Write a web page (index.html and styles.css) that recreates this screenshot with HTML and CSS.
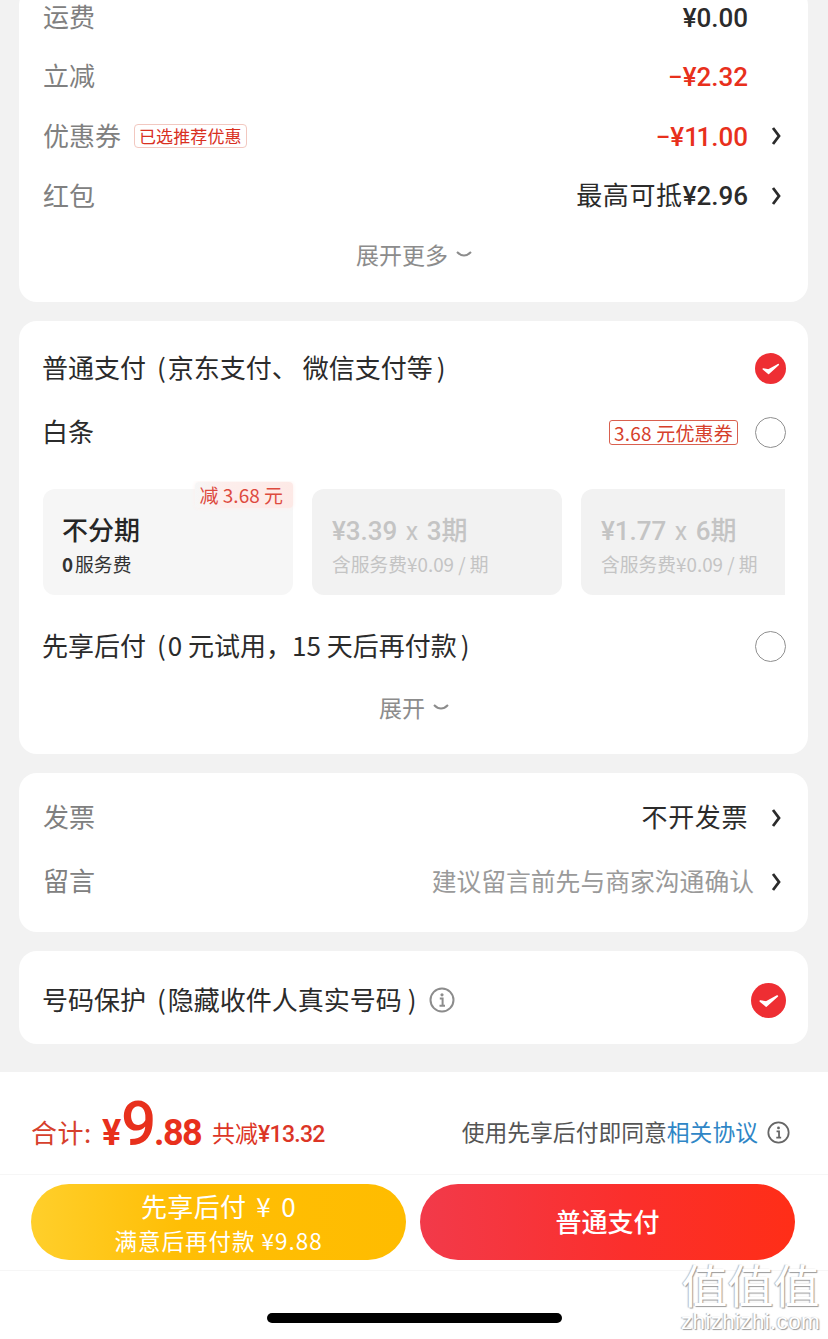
FILE: index.html
```html
<!DOCTYPE html>
<html lang="zh-CN">
<head>
<meta charset="utf-8">
<title>订单结算</title>
<link rel="stylesheet" href="styles.css">
</head>
<body>
<div class="screen">
  <main class="content">
    <section class="card card-fees">
      <div class="row row-fee"><span class="label">运费</span><span class="value num">¥0.00</span><span class="slot"></span></div>
      <div class="row row-fee"><span class="label">立减</span><span class="value num red">−¥2.32</span><span class="slot"></span></div>
      <div class="row row-fee"><span class="label">优惠券</span><span class="tag-soft">已选推荐优惠</span><span class="value num red">−¥<span class="tight">11</span>.00</span><span class="slot"><svg class="chev" viewBox="0 0 10 20"><path d="M2 2 L8 10 L2 18"/></svg></span></div>
      <div class="row row-fee"><span class="label">红包</span><span class="value wide">最高可抵<span class="num-inline">¥2.96</span></span><span class="slot"><svg class="chev" viewBox="0 0 10 20"><path d="M2 2 L8 10 L2 18"/></svg></span></div>
      <div class="expand expand-more">展开更多<svg class="down" viewBox="0 0 16 6"><path d="M1 1 Q8 8 15 1"/></svg></div>
    </section>

    <section class="card card-pay">
      <div class="row row-pay-first"><span class="title">普通支付<span class="par-l">(</span>京东支付<span class="comma">、</span>微信支付等<span class="par-r">)</span></span><span class="radio on"><svg viewBox="0 0 32 32"><circle cx="16" cy="16" r="16"/><path d="M8.5 16.5 L14 21 L24 12 L14 17.5 Z"/></svg></span></div>
      <div class="row row-baitiao"><span class="title">白条</span><span class="tag-line">3.68 元优惠券</span><span class="radio"></span></div>
      <div class="plans">
        <div class="plan plan-active">
          <span class="plan-badge">减 3.68 元</span>
          <div class="plan-main">不分期</div>
          <div class="plan-sub"><b>0</b><span class="plan-fee">服务费</span></div>
        </div>
        <div class="plan">
          <div class="plan-main">¥3.39 <i>x</i> 3期</div>
          <div class="plan-sub">含服务费¥0.09 / 期</div>
        </div>
        <div class="plan">
          <div class="plan-main">¥1.77 <i>x</i> 6期</div>
          <div class="plan-sub">含服务费¥0.09 / 期</div>
        </div>
      </div>
      <div class="row row-later"><span class="title">先享后付<span class="par-l">(</span>0 元试用，15 天后再付款<span class="par-r">)</span></span><span class="radio"></span></div>
      <div class="expand expand-pay">展开<svg class="down" viewBox="0 0 16 6"><path d="M1 1 Q8 8 15 1"/></svg></div>
    </section>

    <section class="card card-invoice">
      <div class="row row-invoice"><span class="label">发票</span><span class="value wide">不开发票</span><span class="slot"><svg class="chev" viewBox="0 0 10 20"><path d="M2 2 L8 10 L2 18"/></svg></span></div>
      <div class="row row-invoice"><span class="label">留言</span><span class="value hint">建议留言前先与商家沟通确认</span><span class="slot slot-narrow"><svg class="chev" viewBox="0 0 10 20"><path d="M2 2 L8 10 L2 18"/></svg></span></div>
    </section>

    <section class="card card-privacy">
      <span class="title">号码保护<span class="par-l">(</span>隐藏收件人真实号码<span class="par-r par-r-wide">)</span></span>
      <svg class="info info-grey" viewBox="0 0 26 26"><circle cx="13" cy="13" r="11.5"/><path d="M10.8 11.6 H13.6 V18.6 M10.5 18.8 H16"/><circle class="dot" cx="13" cy="7.8" r="1.6"/></svg>
      <span class="radio radio-big on"><svg viewBox="0 0 32 32"><circle cx="16" cy="16" r="16"/><path d="M8.5 16.5 L14 21 L24 12 L14 17.5 Z"/></svg></span>
    </section>
  </main>

  <footer class="footer">
    <div class="total">
      <div class="sum">
        <span class="sum-label">合计:</span>
        <span class="sum-yen">¥</span><span class="sum-big">9</span><span class="sum-cents">.88</span>
        <span class="sum-save">共减<span class="sum-save-num">¥13.32</span></span>
      </div>
      <div class="agree">
        <span>使用先享后付即同意<span class="link">相关协议</span></span>
        <svg class="info info-dark" viewBox="0 0 26 26"><circle cx="13" cy="13" r="11.5"/><path d="M10.8 11.6 H13.6 V18.6 M10.5 18.8 H16"/><circle class="dot" cx="13" cy="7.8" r="1.6"/></svg>
      </div>
    </div>
    <div class="actions">
      <button class="btn btn-yellow"><span class="btn-top">先享后付 ¥ 0</span><span class="btn-bottom">满意后再付款 ¥9.88</span></button>
      <button class="btn btn-red">普通支付</button>
    </div>
    <div class="home"><span class="home-bar"></span></div>
    <div class="watermark"><span class="wm-cn">值值值</span><span class="wm-en">zhizhizhi.com</span></div>
  </footer>
</div>
</body>
</html>
```
FILE: styles.css
```css
* { box-sizing: border-box; }
html, body { margin: 0; padding: 0; }
body {
  background: #f2f2f2;
  font-family: "Noto Sans CJK SC", "Noto Sans", sans-serif;
  color: #262626;
}
.screen {
  width: 828px;
  height: 1339px;
  overflow: hidden;
  display: flex;
  flex-direction: column;
  position: relative;
  background: #f2f2f2;
}
.content {
  flex: 1;
  display: flex;
  flex-direction: column;
  gap: 19px;
  padding: 0 20px 0 19px;
  margin-top: -13px;
}
.card {
  background: #fff;
  border-radius: 18px;
  padding: 0 22px 0 23px;
}
.row { display: flex; align-items: center; }
.label { font-size: 26px; line-height: 32px; color: #808080; margin: 0 0 2px 1px; }
.title { font-size: 26px; line-height: 36px; color: #2b2b2b; white-space: nowrap; margin-bottom: 2px; }
.value { margin-left: auto; font-size: 26px; line-height: 32px; color: #2b2b2b; white-space: nowrap; margin-bottom: 2px; }
.wide { letter-spacing: 0.6px; }
.num { font-family: "Roboto", "Noto Sans CJK SC", sans-serif; font-weight: 500; margin-bottom: 0; margin-top: 2px; }
.num-inline { font-family: "Roboto", "Noto Sans CJK SC", sans-serif; font-weight: 500; letter-spacing: 0; }
.tight { letter-spacing: -2.5px; margin-right: 2.5px; }
.red { color: #e8301c; }
.hint { color: #9a9a9a; font-size: 24.8px; }
.par-l { margin: 0 2px 0 11px; }
.par-r { margin: 0 2px 0 4px; }
.par-r-wide { margin-left: 6px; }
.comma { margin-right: 5px; }
.slot { width: 38px; flex: none; display: flex; justify-content: flex-end; padding-right: 5px; }
.slot-narrow { width: 32px; }
.chev { width: 10px; height: 20px; fill: none; stroke: #2b2b2b; stroke-width: 2.8; }

.card-fees { height: 315px; }
.row-fee { height: 59.6px; }
.tag-soft {
  margin-left: 13px;
  font-size: 17px;
  line-height: 22px;
  height: 24px;
  padding: 0 4px;
  color: #d9301f;
  border: 1px solid #f2c8c0;
  border-radius: 4px;
  white-space: nowrap;
  letter-spacing: 0.1px;
}
.expand {
  display: flex;
  justify-content: center;
  align-items: center;
  gap: 8px;
  color: #8c8c8c;
  font-size: 23px;
  line-height: 30px;
}
.expand-more { height: 58px; }
.down { width: 16px; height: 6px; fill: none; stroke: #8c8c8c; stroke-width: 2; }

.card-pay { height: 433px; }
.row-pay-first { height: 64px; margin-top: 15px; justify-content: space-between; }
.row-baitiao { height: 64px; }
.tag-line {
  margin-left: auto;
  margin-right: 17px;
  font-size: 19px;
  line-height: 23px;
  height: 25px;
  padding: 0 4px;
  color: #d6402c;
  border: 1px solid #d9604f;
  border-radius: 3px;
  white-space: nowrap;
  letter-spacing: 0.2px;
}
.radio {
  flex: none;
  width: 31px;
  height: 31px;
  border-radius: 50%;
  border: 1.5px solid #8f8f8f;
  display: block;
}
.radio.on { border: 0; }
.radio svg { display: block; width: 100%; height: 100%; }
.radio svg circle { fill: #ee2e33; }
.radio svg path { fill: #fff; stroke: #fff; stroke-width: 1.6; stroke-linejoin: round; }
.radio-big { width: 35px; height: 35px; margin-left: auto; }

.plans {
  display: flex;
  gap: 19px;
  overflow: hidden;
  margin: 17px 1px 0;
  padding-top: 8px;
}
.plan {
  flex: none;
  width: 250px;
  height: 106px;
  background: #f2f2f2;
  border-radius: 12px;
  padding: 22px 19px 0 20px;
  position: relative;
  overflow: hidden;
  color: #c4c4c4;
  white-space: nowrap;
}
.plan-active { background: #f6f6f6; color: #262626; overflow: visible; padding-left: 19px; }
.plan-main { height: 38px; font-size: 26px; line-height: 40px; font-weight: 500; font-family: "Roboto", "Noto Sans CJK SC", sans-serif; word-spacing: 2px; overflow: hidden; }
.plan-main i { font-style: normal; font-weight: 400; font-size: 25px; }
.plan-active .plan-main { font-family: "Noto Sans CJK SC", sans-serif; line-height: 36px; }
.plan-sub { height: 30px; font-size: 18.8px; line-height: 30px; }
.plan-sub b { font-weight: 700; }
.plan-fee { margin-left: 2px; }
.plan-active .plan-sub { color: #333; }
.plan-badge {
  position: absolute;
  right: 0;
  top: -7px;
  height: 26px;
  padding: 0 10px 0 5px;
  font-size: 19px;
  line-height: 26px;
  color: #dd4a3e;
  background: linear-gradient(90deg, #f6f6f6 0, #fdeeec 30%, #fde9e6 100%);
  border-radius: 4px;
  box-shadow: 0 0 4px #fdeeec;
}
.row-later { height: 64px; margin-top: 19px; justify-content: space-between; }
.expand-pay { height: 58px; }

.card-invoice { height: 159px; padding-top: 13px; }
.row-invoice { height: 64px; }
.row-invoice .label, .row-invoice .value { margin-bottom: 4px; }

.card-privacy {
  height: 93px;
  padding-top: 5px;
  display: flex;
  align-items: center;
}
.info { flex: none; fill: none; }
.info circle { stroke-width: 2; }
.info path { stroke-width: 2; }
.info-grey { width: 26px; height: 26px; margin-left: 10px; }
.info-grey circle, .info-grey path { stroke: #8c8c8c; }
.info-grey .dot { fill: #8c8c8c; stroke: none; }
.info-dark { width: 23px; height: 23px; margin-left: 9px; }
.info-dark circle, .info-dark path { stroke: #666; }
.info-dark .dot { fill: #666; stroke: none; }

.footer {
  flex: none;
  height: 267px;
  background: #fff;
  position: relative;
}
.total {
  height: 103px;
  padding: 0 38px 0 31px;
  display: flex;
  align-items: center;
  justify-content: space-between;
  border-bottom: 1px solid #f6f6f6;
}
.sum {
  display: flex;
  align-items: baseline;
  color: #e8301c;
  white-space: nowrap;
  line-height: 1;
  margin-top: 1px;
}
.sum-label { font-size: 26px; color: #d6402c; width: 71px; letter-spacing: 0.5px; transform: translateY(-2px); }
.sum-yen { font-size: 36px; font-weight: 700; font-family: "Roboto", sans-serif; width: 19px; }
.sum-big { font-size: 62px; font-weight: 500; font-family: "Roboto", sans-serif; width: 33px; }
.sum-cents { font-size: 36px; font-weight: 700; font-family: "Roboto", sans-serif; letter-spacing: -1.5px; width: 58px; }
.sum-save { font-size: 23px; color: #dc3526; transform: translateY(-3px); }
.sum-save-num { font-family: "Roboto", sans-serif; font-weight: 500; letter-spacing: -0.7px; }
.agree { display: flex; align-items: center; font-size: 22.8px; line-height: 32px; color: #555; white-space: nowrap; margin-top: 18px; }
.link { color: #2f86c6; }

.actions {
  height: 96px;
  padding: 9px 33px 0 31px;
  display: flex;
  gap: 14px;
  border-bottom: 1px solid #f6f6f6;
}
.btn {
  flex: 1;
  height: 76px;
  border: 0;
  border-radius: 38px;
  color: #fff;
  font-family: inherit;
  display: flex;
  flex-direction: column;
  align-items: center;
  justify-content: flex-start;
  padding: 5px 0 0;
}
.btn-yellow { background: linear-gradient(90deg, #ffcf2b 0, #ffbe05 40%, #ffbc00 100%); }
.btn-red { background: linear-gradient(90deg, #f23a4a 0, #fb2f2c 55%, #ff2e17 100%); font-size: 26px; font-weight: 500; line-height: 36px; padding: 0 0 3px; justify-content: center; }
.btn-top { font-size: 26px; line-height: 34px; word-spacing: 4px; letter-spacing: 0.3px; }
.btn-bottom { font-size: 22.5px; line-height: 34px; letter-spacing: 1px; }

.home { height: 67px; display: flex; justify-content: center; padding-top: 42px; }
.home-bar { display: block; width: 295px; height: 10px; border-radius: 5px; background: #000; }

.watermark {
  position: absolute;
  right: 8px;
  bottom: 5px;
  display: flex;
  flex-direction: column;
  align-items: center;
  color: #fff;
  text-shadow: 1px 1px 1px #999, -1px 0 1px #bbb;
  white-space: nowrap;
}
.wm-cn { font-size: 46px; line-height: 48px; }
.wm-en { font-size: 22.5px; line-height: 24px; margin-top: 3px; font-family: "Liberation Sans", sans-serif; letter-spacing: 0.3px; }
```
